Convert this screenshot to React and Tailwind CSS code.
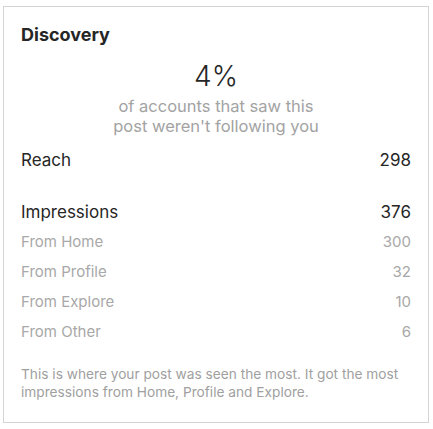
const rows = [
  { label: 'From Home', value: 300 },
  { label: 'From Profile', value: 32 },
  { label: 'From Explore', value: 10 },
  { label: 'From Other', value: 6 },
];

export default function App() {
  return (
    <div className="w-[433px] h-[429px] bg-white pt-[6px] pl-[3px] font-['Inter',sans-serif]">
      <div className="w-[426px] h-[417px] border border-[#d4d4d4] px-[17px] pt-[16px]">
        <h2 className="text-[18px] leading-[24px] font-bold text-[#262626]">Discovery</h2>

        <div className="mt-[13px] flex flex-col items-center">
          <p className="text-[28px] leading-[32px] font-light text-[#262626]">4%</p>
          <p className="mt-[4px] text-[16.5px] leading-[20px] text-[#a3a3a3] text-center">
            of accounts that saw this
            <br />
            post weren't following you
          </p>
        </div>

        <div className="mt-[13px] flex justify-between text-[17px] leading-[22px] text-[#262626]">
          <span>Reach</span>
          <span>298</span>
        </div>

        <div className="mt-[30px] flex justify-between text-[17px] leading-[22px] text-[#262626]">
          <span>Impressions</span>
          <span>376</span>
        </div>

        <div className="mt-[8px] flex flex-col gap-[8px]">
          {rows.map((row) => (
            <div key={row.label} className="flex justify-between text-[15px] leading-[22px] text-[#a8a8a8]">
              <span>{row.label}</span>
              <span>{row.value}</span>
            </div>
          ))}
        </div>

        <p className="mt-[22px] text-[13.7px] leading-[18px] text-[#a0a0a0]">
          This is where your post was seen the most. It got the most impressions from Home, Profile and Explore.
        </p>
      </div>
    </div>
  );
}
